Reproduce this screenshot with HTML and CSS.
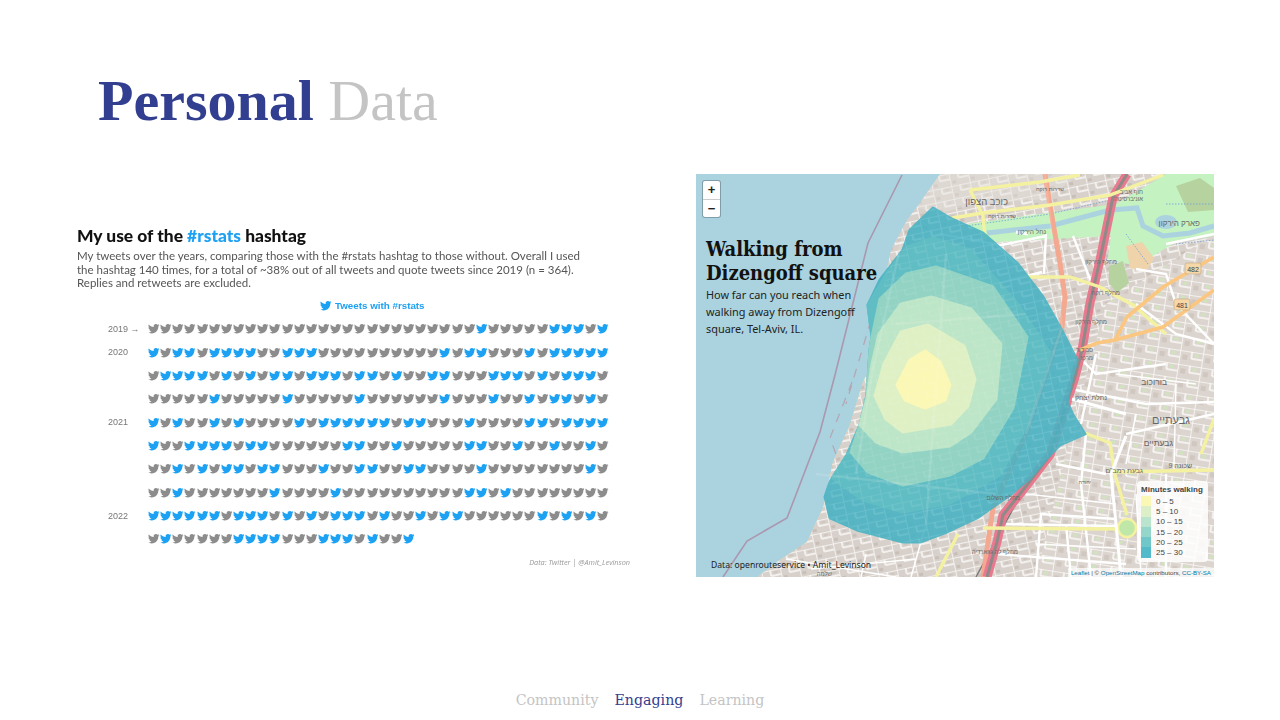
FILE: index.html
```html
<!DOCTYPE html>
<html lang="en">
<head>
  <meta charset="UTF-8">
  <title>Personal Data</title>
  <link rel="stylesheet" href="styles.css">
</head>
<body>

<div class="slide">
  <h1 class="title"><span class="title-strong">Personal</span> Data</h1>

  <div class="panels">
    <div class="chart">
      <h2 class="chart-title">My use of the <span class="blue">#rstats</span> hashtag</h2>
      <p class="chart-text">My tweets over the years, comparing those with the #rstats hashtag to those without. Overall I used<br>the hashtag 140 times, for a total of ~38% out of all tweets and quote tweets since 2019 (n = 364).<br>Replies and retweets are excluded.</p>
      <div class="chart-legend">
        <svg class="bird blue-bird" viewBox="0 0 24 24"><use href="#bird"></use></svg>
        <span>Tweets with #rstats</span>
      </div>
      <div class="rows" id="rows"></div>
      <div class="chart-source">Data: Twitter | @Amit_Levinson</div>
    </div>

    <div class="map">
      <svg class="map-base" viewBox="0 0 518 403" width="518" height="403">
        <defs>
          <path id="bird" d="M23.953 4.57a10 10 0 01-2.825.775 4.958 4.958 0 002.163-2.723c-.951.555-2.005.959-3.127 1.184a4.92 4.92 0 00-8.384 4.482C7.69 8.095 4.067 6.13 1.64 3.162a4.822 4.822 0 00-.666 2.475c0 1.71.87 3.213 2.188 4.096a4.904 4.904 0 01-2.228-.616v.06a4.923 4.923 0 003.946 4.827 4.996 4.996 0 01-2.212.085 4.936 4.936 0 004.604 3.417 9.867 9.867 0 01-6.102 2.105c-.39 0-.779-.023-1.17-.067a13.995 13.995 0 007.557 2.209c9.053 0 13.998-7.496 13.998-13.985 0-.21 0-.42-.015-.63A9.935 9.935 0 0024 4.59z"/>
          <pattern id="blocks" width="19" height="13" patternUnits="userSpaceOnUse" patternTransform="rotate(-12)">
            <rect width="19" height="13" fill="#d8d1cb"/>
            <path d="M0 0H19M0 0V13M9 0V6M9 6H19" stroke="#fbfaf8" stroke-width="1.5" fill="none"/>
            <rect x="2" y="8" width="4" height="3" fill="#c8bfb8"/>
            <rect x="12" y="2" width="4" height="2" fill="#cfc6bf"/>
          </pattern>
          <pattern id="blocks2" width="23" height="14" patternUnits="userSpaceOnUse" patternTransform="rotate(9)">
            <rect width="23" height="14" fill="#dcd5cf"/>
            <path d="M0 0H23M0 0V14M12 0V7M12 7H23" stroke="#fbfaf8" stroke-width="1.6" fill="none"/>
            <rect x="3" y="4" width="5" height="5" fill="#cfc7c0"/>
            <rect x="15" y="2" width="4" height="3" fill="#cfe3bd"/>
          </pattern>
          <pattern id="ghost" width="19" height="13" patternUnits="userSpaceOnUse" patternTransform="rotate(-12)">
            <path d="M0 0H19M0 0V13M9 0V6M9 6H19" stroke="#fff" stroke-opacity="0.13" stroke-width="1.2" fill="none"/>
          </pattern>
        </defs>

        <g class="map-soft">
          <rect class="sea" width="518" height="403"/>
          <path class="beach" d="M195 76L207 70 210 80 197 90ZM171 200L167 208 154 251 137 288 127 334 111 368 81 388 90 389 118 372 133 338 143 290 160 252 175 205Z"/>
          <path fill="url(#blocks)" d="M244 0L221 33 211 46 195 76 190 100 175 190 171 200 167 208 154 251 137 288 127 334 111 368 81 388 61 403H518V0Z"/>
          <path fill="url(#blocks2)" d="M410 130L518 60V403H340L380 240Z"/>
          <path class="north" d="M244 0L221 33 240 40 280 30 350 25 384 0Z"/>
          <path class="park" d="M270 50L420 30 470 0H518V62L480 68 440 92 412 85 415 62 300 68Z"/>
          <path class="park-dark" d="M413 92l14-5 6 22-12 10-8-10z"/>
          <path class="park-tan" d="M430 72l16-4 12 16-8 14-16-4z"/>
          <path class="park-dark" d="M480 12l24-8 14 10v22l-26 2z"/>
          <path class="water" d="M291 59L354 52 414 36 441 34 447 52 467 62 494 59 518 52"/>
          <ellipse class="lake" cx="470" cy="48" rx="11" ry="7"/>
          <path class="river-dots" d="M270 52L354 40 414 26M430 60L452 90M470 30L518 30M480 70L518 66"/>

          <path class="street" d="M244 60L300 70 320 90M300 72L350 62M350 60L348 100M300 110L346 98M377 62L400 120M470 70L518 60M440 95L470 100 480 130 518 170M440 130L480 160 518 170M370 214L450 230 518 228M380 180L400 200 470 190M390 260L385 310 395 403M340 403L345 340 420 345M430 260L518 240M360 290L410 300M300 350L420 352M370 350L375 403M470 300L470 403M300 380L430 390M400 180L385 250"/>
          <path class="street-thin" d="M420 200L500 210M440 240L430 290M480 210L478 290M330 320L420 330M440 320L445 400M340 370L440 375M90 385L200 403M115 395L220 385M170 380L165 403M230 350L215 403"/>

          <path class="rail" d="M280 403L330 311"/>
          <path class="salmon" d="M349 0L357 49 364 89 369 123 366 153 330 260 297 334 287 403"/>
          <path class="pink" d="M431 0L417 23 404 86 394 129 386 176 379 203 354 281 331 311 307 341 301 368 291 403"/>
          <path class="pink-core" d="M431 0L417 23 404 86 394 129 386 176 379 203 354 281 331 311 307 341 301 368 291 403"/>
          <path class="yellow" d="M256 44L287 39 354 31 414 21 467 1M274 16L344 8 384 1M274 16L287 42 289 65M331 103L374 103 404 113 437 131 470 160M287 354L424 355M389 259L414 269 419 301 431 341M419 298L518 296M518 245L505 280M240 403L262 360"/>
          <circle class="round" cx="431" cy="354" r="9"/>
          <path class="peach" d="M518 83L467 113 431 143 419 166 401 169 384 176M419 166L467 153 518 116"/>
          <path class="white-road" d="M320 58L332 60M430 262L415 300 420 350 425 403M376 225L430 240"/>

          <path class="boundary" d="M206 1L172 69 139 201 124 258 91 344 51 367 27 403"/>
          <path class="breakwater" d="M175 146L150 230M156 208L134 264 141 283"/>

          <path class="iso iso-1" d="M237 34L214 56 207 76 194 93 184 106 172 131 176 163 174 176 171 221 164 251 151 281 134 308 129 323 134 344 161 356 207 368 224 368 251 358 281 344 314 321 334 304 351 284 364 271 389 260 377 241 371 228 376 204 381 186 364 153 347 123 321 89 287 59 254 44Z"/>
          <path class="iso iso-2" d="M237 64L211 73 191 99 172 131 176 163 174 176 171 221 164 251 151 281 136 304 167 326 207 338 254 329 304 301 331 251 354 179 321 129 274 76Z"/>
          <path class="iso iso-3" d="M240 93L210 100 184 125 176 163 174 176 171 221 164 251 155 278 172 298 207 311 254 301 287 284 317 234 331 163 297 113Z"/>
          <path class="iso iso-4" d="M235 123L205 130 183 160 176 190 171 225 164 251 180 268 207 278 254 272 275 258 300 225 305 170 275 135Z"/>
          <path class="iso iso-5" d="M232 151L205 158 188 190 179 222 190 245 207 258 255 250 272 232 279 205 268 172Z"/>
          <path class="iso iso-6" d="M201 211L214 186 229 177 244 188 254 211 249 226 229 234 209 226Z"/>
          <path fill="url(#ghost)" d="M214 56L194 93 190 100 175 190 171 200 167 208 154 251 137 288 134 344 161 356 207 368 224 368 251 358 281 344 314 321 334 304 351 284 364 271 389 260 377 241 371 228 376 204 381 186 364 153 347 123 321 89 287 59 254 44 237 34Z"/>
          <path class="ghost-road" d="M207 60L176 200 160 300M349 0L366 153 330 260M120 300L300 320M250 80L230 350M200 150L330 140"/>
        </g>

        <rect class="shield" x="489" y="89" width="16" height="11" rx="2"/>
        <text class="shield-text" x="497" y="98">482</text>
        <rect class="shield" x="478" y="125" width="16" height="11" rx="2"/>
        <text class="shield-text" x="486" y="134">481</text>

        <g class="he">
          <text x="312" y="31" font-size="9.5">כוכב הצפון</text>
          <text x="350" y="60" font-size="6.5" fill="#5b80a0">נחל הירקון</text>
          <text x="504" y="52" font-size="8" fill="#3d9a6a">פארק הירקון</text>
          <text x="447" y="20" font-size="6" fill="#3d4fb0">חוף אביב</text>
          <text x="447" y="27" font-size="6" fill="#3d4fb0">אוניברסיטה</text>
          <text x="421" y="90" font-size="6" fill="#c73a4a">מחלף הירקון</text>
          <text x="424" y="121" font-size="6" fill="#c73a4a">מחלף רוקח</text>
          <text x="411" y="150" font-size="6" fill="#c73a4a">מחלף הירקון</text>
          <text x="397" y="178" font-size="6" fill="#3d4fb0">סבידור</text>
          <text x="397" y="186" font-size="6" fill="#3d4fb0">מרכז</text>
          <text x="471" y="211" font-size="8.5">בורוכוב</text>
          <text x="411" y="226" font-size="7">נחלת יצחק</text>
          <text x="494" y="250" font-size="11" fill="#333">גבעתיים</text>
          <text x="477" y="272" font-size="8.5" fill="#555">גבעתיים</text>
          <text x="447" y="299" font-size="7" fill="#555">גבעת רמב"ם</text>
          <text x="496" y="294" font-size="7" fill="#555">שכונה 9</text>
          <text x="324" y="326" font-size="6" fill="#c73a4a">מחלף השלום</text>
          <text x="322" y="380" font-size="6" fill="#c73a4a">מחלף לה גווארדיה</text>
          <text x="136" y="402" font-size="6" fill="#3d4fb0">שלמה</text>
          <text x="395" y="310" font-size="5.5">יהודה</text>
          <text x="320" y="44" font-size="5.5">שדרות רוקח</text>
          <text x="368" y="17" font-size="5.5">שדרות רוקח</text>
        </g>
      </svg>

      <div class="zoom">
        <div class="zoom-btn">+</div>
        <div class="zoom-btn">−</div>
      </div>

      <div class="map-intro">
        <h2 class="map-title">Walking from<br>Dizengoff square</h2>
        <p class="map-text">How far can you reach when<br>walking away from Dizengoff<br>square, Tel-Aviv, IL.</p>
      </div>

      <div class="map-source">Data: openrouteservice • Amit_Levinson</div>

      <div class="legend">
        <div class="legend-title">Minutes walking</div>
        <div class="legend-row"><i class="sw sw-1"></i>0 – 5</div>
        <div class="legend-row"><i class="sw sw-2"></i>5 – 10</div>
        <div class="legend-row"><i class="sw sw-3"></i>10 – 15</div>
        <div class="legend-row"><i class="sw sw-4"></i>15 – 20</div>
        <div class="legend-row"><i class="sw sw-5"></i>20 – 25</div>
        <div class="legend-row"><i class="sw sw-6"></i>25 – 30</div>
      </div>

      <div class="attribution"><a>Leaflet</a> | © <a>OpenStreetMap</a> contributors, <a>CC-BY-SA</a></div>
    </div>
  </div>

  <nav class="tabs">
    <a class="tab">Community</a>
    <a class="tab tab-active">Engaging</a>
    <a class="tab">Learning</a>
  </nav>
</div>

<script src="birds.js"></script>
</body>
</html>
```

FILE: styles.css
```css
body {
  margin: 0;
  background: white;
  overflow: hidden;
}

.slide {
  height: 720px;
  display: flex;
  flex-direction: column;
}

.title {
  margin: 66px 0 0 98px;
  height: 108px;
  font-family: "Liberation Serif", serif;
  font-size: 58px;
  line-height: 70px;
  font-weight: normal;
  color: #c4c4c4;
}

.title-strong {
  font-weight: bold;
  color: #323e8f;
}

.panels {
  display: flex;
  align-items: flex-start;
  padding-left: 77px;
  gap: 66px;
}

/* left picture */
.chart {
  width: 553px;
  margin-top: 52px;
  filter: blur(0.25px);
}

.chart-title {
  margin: 0;
  font-family: "Lato", sans-serif;
  font-size: 17.4px;
  line-height: 20px;
  font-weight: 900;
  color: #111;
}

.blue {
  color: #1da1f2;
}

.chart-text {
  margin: 3px 0 0;
  font-family: "Lato", sans-serif;
  font-size: 11.5px;
  line-height: 13.5px;
  color: #555;
}

.chart-legend {
  display: flex;
  justify-content: center;
  align-items: center;
  gap: 3px;
  margin: 9px 0 0 38px;
  font-family: "Liberation Sans", sans-serif;
  font-size: 9.8px;
  font-weight: bold;
  color: #1da1f2;
  height: 14px;
}

.rows {
  margin-top: 5px;
}

.row {
  display: flex;
  align-items: center;
  height: 23.33px;
}

.year {
  width: 40px;
  margin-left: 31px;
  font-family: "Liberation Sans", sans-serif;
  font-size: 9px;
  color: #777;
  white-space: nowrap;
}

.birds {
  display: flex;
  gap: 0.65px;
}

.bird {
  width: 11.5px;
  height: 11.5px;
  fill: #8c8c8c;
  display: block;
}

.blue-bird {
  fill: #1da1f2;
}

.chart-source {
  margin-top: 6px;
  text-align: right;
  font-family: "Open Sans", sans-serif;
  font-size: 7.3px;
  font-style: italic;
  color: #999;
}

/* right picture */
.map {
  position: relative;
  width: 518px;
  height: 403px;
  overflow: hidden;
}

.map-base {
  display: block;
}

.map-soft {
  filter: blur(0.4px);
}

.sea { fill: #aad3df; }
.beach { fill: #f5dc9c; }
.north { fill: #e4e0dc; opacity: 0.45; }
.park { fill: #c4f2c0; }
.park-dark { fill: #b5d29f; }
.park-tan { fill: #eed3ab; }
.lake { fill: #aad3df; }

.water {
  fill: none;
  stroke: #aad3df;
  stroke-width: 5;
}

.river-dots {
  fill: none;
  stroke: #6f9fd8;
  stroke-width: 0.8;
  stroke-dasharray: 1.5 1.5;
}

.street {
  fill: none;
  stroke: white;
  stroke-width: 2.4;
}

.street-thin {
  fill: none;
  stroke: white;
  stroke-width: 1.5;
}

.rail {
  fill: none;
  stroke: #777;
  stroke-width: 1.5;
}

.salmon {
  fill: none;
  stroke: #f4a88f;
  stroke-width: 5;
}

.pink {
  fill: none;
  stroke: #e8798e;
  stroke-width: 9;
}

.pink-core {
  fill: none;
  stroke: #8f8a88;
  stroke-width: 3;
}

.yellow {
  fill: none;
  stroke: #f4f2a0;
  stroke-width: 3.4;
}

.round {
  fill: #bfe8a8;
  stroke: #f4f2a0;
  stroke-width: 2.5;
}

.peach {
  fill: none;
  stroke: #fbc67f;
  stroke-width: 3.6;
}

.white-road {
  fill: none;
  stroke: white;
  stroke-width: 3;
}

.shield {
  fill: #f6d7a8;
  stroke: #b99a70;
  stroke-width: 0.5;
}

.shield-text {
  font-family: "Liberation Sans", sans-serif;
  font-size: 7px;
  text-anchor: middle;
  fill: #444;
}

.he text {
  font-family: "Liberation Sans", sans-serif;
  fill: #666;
  direction: rtl;
}

.boundary {
  fill: none;
  stroke: #ab97af;
  stroke-width: 1.6;
}

.breakwater {
  fill: none;
  stroke: #b3a5b4;
  stroke-width: 1.2;
  stroke-dasharray: 9 8;
}

.iso {
  opacity: 0.88;
  stroke-width: 3;
  stroke-linejoin: round;
}

.iso-1 { fill: #47b2c3; stroke: #47b2c3; }
.iso-2 { fill: #62bfc4; stroke: #62bfc4; }
.iso-3 { fill: #9ad7c5; stroke: #9ad7c5; }
.iso-4 { fill: #c3e8c8; stroke: #c3e8c8; }
.iso-5 { fill: #e3f2c4; stroke: #e3f2c4; }
.iso-6 { fill: #fff8b4; stroke: #fff8b4; }

.ghost-road {
  fill: none;
  stroke: #fff;
  stroke-opacity: 0.12;
  stroke-width: 2.5;
}

.zoom {
  position: absolute;
  left: 7px;
  top: 7px;
  width: 17px;
  background: white;
  border-radius: 2px;
  box-shadow: 0 0 0 1px rgba(0, 0, 0, 0.25);
}

.zoom-btn {
  height: 17.5px;
  font-family: "Liberation Sans", sans-serif;
  font-size: 13px;
  line-height: 17px;
  font-weight: bold;
  text-align: center;
  color: #222;
}

.zoom-btn + .zoom-btn {
  border-top: 1px solid #ccc;
}

.map-intro {
  position: absolute;
  left: 10px;
  top: 63px;
}

.map-title {
  margin: 0;
  font-family: "DejaVu Serif", serif;
  font-stretch: condensed;
  font-size: 20px;
  line-height: 24px;
  font-weight: bold;
  color: #111;
}

.map-text {
  margin: 1px 0 0;
  font-family: "Noto Sans", sans-serif;
  font-size: 10.9px;
  line-height: 17.2px;
  color: #222;
}

.map-source {
  position: absolute;
  left: 15px;
  top: 385px;
  font-family: "Noto Sans", sans-serif;
  font-size: 8.6px;
  color: #222;
}

.legend {
  position: absolute;
  left: 441px;
  top: 307px;
  width: 71px;
  height: 81px;
  box-sizing: border-box;
  padding: 3px 4px;
  background: rgba(255, 255, 255, 0.85);
  border-radius: 4px;
  font-family: "Liberation Sans", sans-serif;
  font-size: 8px;
  color: #444;
}

.legend-title {
  font-weight: bold;
  line-height: 11px;
  margin-bottom: 1px;
}

.legend-row {
  display: flex;
  align-items: center;
  gap: 5px;
  height: 10.3px;
  white-space: nowrap;
}

.sw {
  display: block;
  width: 10px;
  height: 10.3px;
}

.sw-1 { background: #fbf7b4; }
.sw-2 { background: #dcefc9; }
.sw-3 { background: #bbe4cf; }
.sw-4 { background: #95d6cb; }
.sw-5 { background: #70c7ca; }
.sw-6 { background: #54b9c8; }

.attribution {
  position: absolute;
  right: 0;
  bottom: 0;
  padding: 0 3px;
  background: rgba(255, 255, 255, 0.7);
  font-family: "Liberation Sans", sans-serif;
  font-size: 6.2px;
  line-height: 9px;
  color: #444;
}

.attribution a {
  color: #0078a8;
}

/* bottom menu */
.tabs {
  margin-top: auto;
  padding-bottom: 10px;
  display: flex;
  justify-content: center;
  gap: 16px;
  font-family: "DejaVu Serif", serif;
  font-size: 14.2px;
  line-height: 20px;
}

.tab {
  color: #c4c4c4;
}

.tab-active {
  color: #323e8f;
}
```

FILE: birds.js
```js
// which tweets of each row used the hashtag (index in the row)
const years = ["2019 →", "2020", "", "", "2021", "", "", "", "2022", ""];
const blue = [
  [27, 33, 34, 35, 37],
  [0, 2, 3, 5, 6, 7, 8, 11, 12, 13, 24, 26, 27, 31, 33, 34, 35, 36, 37],
  [1, 2, 3, 4, 6, 8, 10, 11, 13, 14, 15, 17, 18, 20, 23, 24, 28, 29, 30, 32, 34, 35, 36],
  [5, 11, 17, 24, 28, 31, 33, 34, 36],
  [0, 2, 5, 7, 12, 14, 15, 16, 17, 18, 19, 21, 22, 26, 31, 32, 34, 35, 36, 37],
  [0, 3, 4, 5, 6, 8, 9, 16, 17, 20, 26, 27, 30, 33, 36],
  [2, 4, 6, 7, 9, 10, 14, 17, 18, 21, 22, 27, 36],
  [2, 10, 15, 26, 27, 29],
  [0, 1, 2, 3, 4, 5, 7, 8, 9, 11, 13, 15, 16, 17, 19, 22, 24, 25, 32, 34, 36],
  [1, 7, 8, 9, 10, 14, 15, 16, 18, 21]
];

const rows = document.getElementById("rows");
let html = "";
blue.forEach((list, r) => {
  const count = r === 9 ? 22 : 38;
  html += `<div class="row"><div class="year">${years[r]}</div><div class="birds">`;
  for (let i = 0; i < count; i++) {
    const cls = list.includes(i) ? "bird blue-bird" : "bird";
    html += `<svg class="${cls}" viewBox="0 0 24 24"><use href="#bird"></use></svg>`;
  }
  html += "</div></div>";
});
rows.innerHTML = html;
```
